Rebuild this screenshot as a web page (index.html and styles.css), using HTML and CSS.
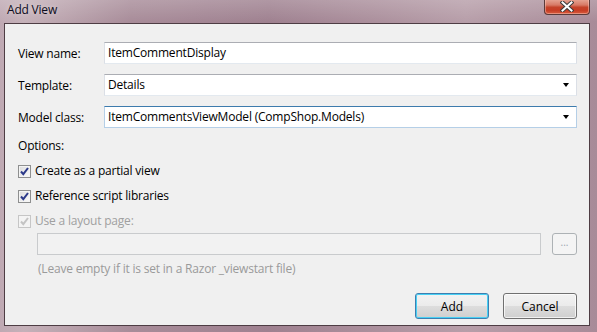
FILE: index.html
```html
<!DOCTYPE html>
<html lang="en">
<head>
    <meta charset="UTF-8">
    <title>Add View</title>
    <link rel="stylesheet" href="styles.css">
</head>
<body>
<div class="window">
    <div class="titlebar">
        <span class="title">Add View</span>
        <button class="close" type="button" aria-label="Close">
            <svg width="14" height="11" viewBox="0 0 14 11">
                <path d="M2.5 1.5 L11.5 9.5 M11.5 1.5 L2.5 9.5" stroke="#3b3b3b" stroke-width="4" stroke-linecap="square"/>
                <path d="M2.5 1.5 L11.5 9.5 M11.5 1.5 L2.5 9.5" stroke="#ffffff" stroke-width="2" stroke-linecap="square"/>
            </svg>
        </button>
    </div>

    <div class="panel">
        <form class="fields">
            <label for="view-name">View name:</label>
            <div class="textbox">ItemCommentDisplay</div>

            <label for="template">Template:</label>
            <div class="textbox combo">Details<span class="arrow"></span></div>

            <label for="model-class">Model class:</label>
            <div class="textbox combo focused">ItemCommentsViewModel (CompShop.Models)<span class="arrow"></span></div>
        </form>

        <div class="options-title">Options:</div>

        <div class="option">
            <span class="check">
                <svg width="11" height="11" viewBox="0 0 11 11"><path d="M2 5.5 L4.3 8.2 L9 2" fill="none" stroke="#2c3a8a" stroke-width="2"/></svg>
            </span>
            Create as a partial view
        </div>
        <div class="option">
            <span class="check">
                <svg width="11" height="11" viewBox="0 0 11 11"><path d="M2 5.5 L4.3 8.2 L9 2" fill="none" stroke="#2c3a8a" stroke-width="2"/></svg>
            </span>
            Reference script libraries
        </div>
        <div class="option disabled">
            <span class="check">
                <svg width="11" height="11" viewBox="0 0 11 11"><path d="M2 5.5 L4.3 8.2 L9 2" fill="none" stroke="#c4c4c4" stroke-width="2"/></svg>
            </span>
            Use a layout page:
        </div>

        <div class="layout-row">
            <div class="textbox disabled-box"></div>
            <button class="browse" type="button">...</button>
        </div>
        <div class="hint">(Leave empty if it is set in a Razor _viewstart file)</div>

        <div class="actions">
            <button class="btn default" type="button">Add</button>
            <button class="btn" type="button">Cancel</button>
        </div>
    </div>
</div>
</body>
</html>
```

FILE: styles.css
```css
body {
    margin: 0;
    font-family: "Open Sans", "Noto Sans", sans-serif;
    font-size: 12px;
    letter-spacing: -0.2px;
    color: #000;
}

.window {
    width: 597px;
    height: 332px;
    box-sizing: border-box;
    padding: 0 7px 0 4px;
    background:
        linear-gradient(to bottom, rgba(255, 255, 255, .18), rgba(255, 255, 255, 0) 22px),
        linear-gradient(to right, #bfa9b3 0%, #c5b1b9 4%, #a88c99 22%, #9f8190 45%, #ab8f9c 62%, #b79ea9 78%, #a88b98 100%);
    display: flex;
    flex-direction: column;
}

.titlebar {
    height: 23px;
    display: flex;
    align-items: flex-start;
    flex-shrink: 0;
}

.title {
    margin: 1px 0 0 3px;
    line-height: 18px;
    color: #0c0c1c;
    text-shadow: 0 0 5px rgba(255, 255, 255, .45);
}

.close {
    margin-left: auto;
    width: 46px;
    height: 16px;
    margin-top: -1px;
    padding: 0;
    border: 1px solid #5a3a3a;
    border-top: none;
    border-radius: 0 0 4px 4px;
    background: linear-gradient(to bottom, #e7a898 0%, #d77a66 40%, #c4432a 55%, #c63c24 75%, #d85c3e 100%);
    box-shadow: inset 0 0 0 1px rgba(255, 210, 200, .45);
    display: flex;
    align-items: center;
    justify-content: center;
}

.close svg {
    display: block;
    margin-top: -1px;
}

.panel {
    height: 303px;
    box-sizing: border-box;
    border: 1px solid #4e3d44;
    background: #f0f0f0;
    padding: 18px 12px 0 13px;
    display: flex;
    flex-direction: column;
}

.fields {
    margin: 0;
    display: grid;
    grid-template-columns: 86px 1fr;
    row-gap: 10px;
    align-items: center;
}

.textbox {
    position: relative;
    height: 22px;
    box-sizing: border-box;
    border: 1px solid #dbdfe6;
    border-top-color: #abadb3;
    border-bottom-color: #e3e9ef;
    background: #fff;
    padding: 0 20px 0 3px;
    line-height: 19px;
    white-space: nowrap;
}

.combo .arrow {
    position: absolute;
    right: 7px;
    top: 8px;
    width: 0;
    height: 0;
    border-left: 3.5px solid transparent;
    border-right: 3.5px solid transparent;
    border-top: 4px solid #000;
}

.focused {
    border-color: #b5cfe7;
    border-top-color: #3d7bad;
}

.options-title {
    margin-top: 10px;
    line-height: 16px;
}

.option {
    display: flex;
    align-items: center;
    gap: 4px;
    margin-top: 9px;
    line-height: 16px;
}

.check {
    width: 13px;
    height: 13px;
    box-sizing: border-box;
    border: 1px solid #8e8f8f;
    background: linear-gradient(135deg, #dcdcdc, #fbfbfb);
    box-shadow: inset 0 0 0 1px #f4f4f4;
    display: flex;
    align-items: center;
    justify-content: center;
}

.check svg {
    display: block;
}

.disabled {
    color: #a0a0a0;
}

.disabled .check {
    border-color: #c6c6c6;
    background: #f4f4f4;
}

.layout-row {
    display: flex;
    gap: 11px;
    margin: 4px 0 0 19px;
}

.disabled-box {
    flex: 1;
    background: #f2f2f2;
    border: 1px solid #c9cbcd;
}

.browse {
    width: 25px;
    height: 22px;
    padding: 0 0 4px;
    border: 1px solid #adb2b5;
    border-radius: 3px;
    background: #f4f4f4;
    color: #9aa4b0;
    font: inherit;
    font-size: 10px;
    line-height: 10px;
}

.hint {
    margin: 6px 0 0 20px;
    line-height: 16px;
    color: #9a9a9a;
}

.actions {
    display: flex;
    justify-content: flex-end;
    gap: 14px;
    margin-top: 16px;
}

.btn {
    width: 74px;
    height: 26px;
    padding: 0;
    font: inherit;
    color: #000;
    border: 1px solid #707070;
    border-radius: 3px;
    background: linear-gradient(to bottom, #f2f2f2 0%, #ebebeb 50%, #dddddd 51%, #cfcfcf 100%);
    box-shadow: inset 0 0 0 1px rgba(255, 255, 255, .7);
}

.btn.default {
    border-color: #3c7fb1;
    box-shadow: inset 0 0 0 1px #48d0f4;
}
```
